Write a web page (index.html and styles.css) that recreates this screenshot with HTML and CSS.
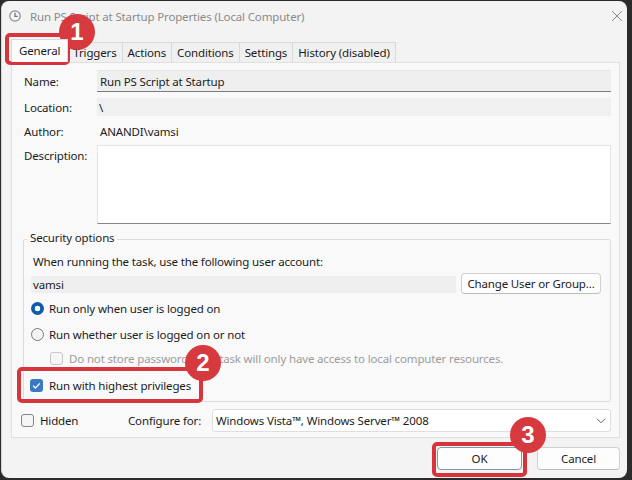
FILE: index.html
```html
<!DOCTYPE html>
<html>
<head>
<meta charset="utf-8">
<link rel="stylesheet" href="styles.css">
</head>
<body>
<div class="window">
  <div class="titlebar">
    <svg class="app-icon" width="12" height="12" viewBox="0 0 12 12"><circle cx="6" cy="6" r="5.2" fill="#f6f6f6" stroke="#8a8a8a" stroke-width="1.2"/><path d="M6 2.8V6.3H8.6" fill="none" stroke="#6a6a6a" stroke-width="1.2"/></svg>
    <span class="title">Run PS Script at Startup Properties (Local Computer)</span>
    <svg class="close" width="12" height="12" viewBox="0 0 12 12"><path d="M1 1L11 11M11 1L1 11" stroke="#8a8a8a" stroke-width="1"/></svg>
  </div>
  <div class="tabs">
    <div class="tab active">General</div>
    <div class="tab">Triggers</div>
    <div class="tab">Actions</div>
    <div class="tab">Conditions</div>
    <div class="tab">Settings</div>
    <div class="tab">History (disabled)</div>
  </div>
  <div class="panel">
    <div class="form">
      <div class="lbl">Name:</div><div class="field name">Run PS Script at Startup</div>
      <div class="lbl">Location:</div><div class="field loc">\</div>
      <div class="lbl">Author:</div><div class="val">ANANDI\vamsi</div>
      <div class="lbl top">Description:</div><div class="textarea"></div>
    </div>
    <div class="group">
      <div class="group-title">Security options</div>
      <div class="g-line">When running the task, use the following user account:</div>
      <div class="user-row"><div class="field user">vamsi</div><div class="btn change">Change User or Group...</div></div>
      <div class="opt r1"><span class="radio on"></span>Run only when user is logged on</div>
      <div class="opt r2"><span class="radio"></span>Run whether user is logged on or not</div>
      <div class="opt sub disabled"><span class="cb"></span>Do not store password.&nbsp; The task will only have access to local computer resources.</div>
      <div class="opt high"><span class="cb on"><svg width="13" height="13" viewBox="0 0 13 13"><path d="M3.2 6.8L5.4 9L9.8 4.4" fill="none" stroke="#fff" stroke-width="1.3"/></svg></span>Run with highest privileges</div>
    </div>
    <div class="bottom-row">
      <span class="cb"></span><span class="hidden-lbl">Hidden</span>
      <span class="cfg-lbl">Configure for:</span>
      <div class="select"><span>Windows Vista™, Windows Server™ 2008</span><svg width="10" height="6" viewBox="0 0 10 6"><path d="M1 0.8L5 4.8L9 0.8" fill="none" stroke="#606060" stroke-width="1"/></svg></div>
    </div>
  </div>
  <div class="buttons">
    <div class="btn ok">OK</div>
    <div class="btn cancel">Cancel</div>
  </div>
</div>

<div class="hl hl1"></div>
<div class="hl hl2"></div>
<div class="hl hl3"></div>
<div class="badge b1">1</div>
<div class="badge b2">2</div>
<div class="badge b3">3</div>
</body>
</html>
```
FILE: styles.css
```css
html, body {
  margin: 0;
  padding: 0;
}
body {
  position: relative;
  width: 632px;
  height: 480px;
  overflow: hidden;
  background: #2b2b2b;
  font-family: "Noto Sans", "Open Sans", sans-serif;
  font-size: 11.5px;
  letter-spacing: -0.15px;
  color: #1b1b1b;
}
.window {
  margin: 1px 0 0 1px;
  width: 626px;
  height: 477px;
  background: #f3f3f3;
  border-radius: 8px;
  display: flex;
  flex-direction: column;
  box-sizing: border-box;
  border-left: 1px solid #d8d8d8;
}
.titlebar {
  height: 30px;
  display: flex;
  align-items: center;
  padding-left: 7px;
}
.app-icon { flex: none; }
.title {
  margin-left: 9px;
  color: #8a8a8a;
  flex: 1;
}
.close { margin-right: 4px; }
.tabs {
  margin: 9px 0 0 9px;
  height: 22px;
  display: flex;
  align-items: flex-end;
}
.tab {
  height: 19px;
  line-height: 19px;
  padding: 0 5px;
  background: #f0f0f0;
  border: 1px solid #dadada;
  border-bottom: none;
  margin-right: -1px;
}
.tab.active {
  height: 22px;
  line-height: 22px;
  background: #fbfbfb;
  padding: 0 7px;
  position: relative;
  z-index: 1;
}
.panel {
  margin: 0 7px 0 9px;
  background: #f9f9f9;
  border: 1px solid #e0e0e0;
  padding: 7px 8px 5px 11px;
  display: flex;
  flex-direction: column;
}
.form {
  display: grid;
  grid-template-columns: 73px 1fr;
  grid-template-rows: 22px 18px 18px 78px;
  row-gap: 6px;
  margin-left: 1px;
  align-items: center;
}
.form .textarea { align-self: stretch; }
.lbl.top { align-self: start; padding-top: 2px; }
.field {
  background: #efefef;
  padding-left: 2px;
  height: 100%;
  display: flex;
  align-items: center;
  box-sizing: border-box;
}
.field.name {
  border-bottom: 1px solid #7c7c7c;
  border-top: 1px solid #e6e6e6;
  padding-left: 3px;
}
.field.loc { background: #f0f0f0; }
.val { padding-left: 3px; }
.textarea {
  background: #ffffff;
  border: 1px solid #e4e4e4;
  border-bottom: 1px solid #868686;
  margin-top: -1px;
}
.group {
  margin-top: 15px;
  border: 1px solid #dcdcdc;
  border-radius: 2px;
  padding: 0 9px 8px 7px;
  display: flex;
  flex-direction: column;
  align-items: flex-start;
}
.group-title {
  margin: -10px 0 0 -4px;
  padding: 0 3px;
  height: 16px;
  line-height: 16px;
  background: #f9f9f9;
}
.g-line {
  margin: 8px 0 0 2px;
  height: 16px;
  line-height: 16px;
}
.user-row {
  margin-top: 3px;
  height: 21px;
  width: 100%;
  display: flex;
  align-items: center;
}
.field.user {
  width: 425px;
  height: 17px;
  margin-top: 2px;
}
.btn {
  background: #fdfdfd;
  border: 1px solid #d0d0d0;
  border-bottom-color: #bdbdbd;
  border-radius: 4px;
  box-sizing: border-box;
  display: flex;
  align-items: center;
  justify-content: center;
}
.btn.change {
  margin-left: auto;
  width: 140px;
  height: 21px;
}
.opt {
  height: 16px;
  display: flex;
  align-items: center;
  gap: 5px;
}
.opt.r1 { margin-top: 6px; }
.opt.r2 { margin-top: 10px; }
.opt.sub { margin: 8px 0 0 19px; gap: 6px; }
.opt.high { margin: 11px 0 0 -1px; gap: 6px; }
.disabled { color: #9c9c9c; }
.radio {
  width: 13px;
  height: 13px;
  box-sizing: border-box;
  border-radius: 50%;
  border: 1px solid #7a7a7a;
  background: #f4f4f4;
  flex: none;
}
.radio.on {
  border: none;
  background: radial-gradient(circle, #ffffff 0 2.6px, #0b5cab 3.1px);
}
.cb {
  width: 13px;
  height: 13px;
  box-sizing: border-box;
  border: 1px solid #858585;
  border-radius: 3px;
  background: #f6f6f6;
  flex: none;
  display: block;
}
.disabled .cb { border-color: #c8c8c8; }
.cb.on {
  background: #3b78c6;
  border: none;
}
.cb.on svg { display: block; }
.bottom-row {
  margin-top: 7px;
  height: 23px;
  display: flex;
  align-items: center;
}
.bottom-row .cb { margin-left: -2px; }
.hidden-lbl { margin-left: 6px; flex: 0 0 88px; }
.cfg-lbl { flex: 0 0 84px; }
.select {
  flex: 1;
  height: 23px;
  box-sizing: border-box;
  background: #ffffff;
  border: 1px solid #dedede;
  border-radius: 3px;
  display: flex;
  align-items: center;
  justify-content: space-between;
  padding: 0 4px 0 3px;
}
.buttons {
  margin: 9px 7px 0 0;
  display: flex;
  justify-content: flex-end;
  gap: 15px;
}
.btn.ok {
  width: 85px;
  height: 23px;
  border-color: #7b9cb0;
}
.btn.cancel {
  width: 83px;
  height: 23px;
}
.hl {
  position: absolute;
  border: 4px solid #d7353b;
  border-radius: 5px;
  box-sizing: border-box;
}
.hl1 { left: 5px; top: 33px; width: 65px; height: 32px; }
.hl2 { left: 17px; top: 367px; width: 186px; height: 36px; }
.hl3 { left: 432px; top: 442px; width: 95px; height: 35px; }
.badge {
  position: absolute;
  width: 36px;
  height: 36px;
  border-radius: 50%;
  background: #d6393e;
  color: #ffffff;
  font-family: "Liberation Sans", Arial, sans-serif;
  font-weight: bold;
  font-size: 24px;
  letter-spacing: 0;
  line-height: 36px;
  text-align: center;
}
.b1 { left: 59px; top: 14px; }
.b2 { left: 185px; top: 345px; }
.b3 { left: 510px; top: 417px; }
```
